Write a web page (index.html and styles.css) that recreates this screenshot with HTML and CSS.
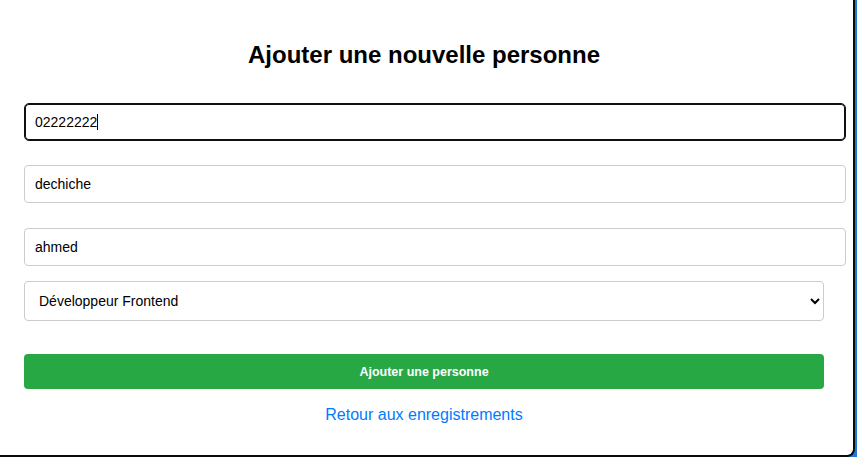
FILE: index.html
```html
<!DOCTYPE html>
<html lang="fr">
<head>
<meta charset="utf-8">
<title>Ajouter une nouvelle personne</title>
<link rel="stylesheet" href="styles.css">
</head>
<body>
<div class="card">
  <h2 class="title">Ajouter une nouvelle personne</h2>
  <form class="form">
    <div class="field field-first">
      <input class="input input-focused" type="text" value="02222222">
      <span class="caret"></span>
    </div>
    <div class="field field-second">
      <input class="input" type="text" value="dechiche">
    </div>
    <div class="field field-third">
      <input class="input" type="text" value="ahmed">
    </div>
    <select class="select">
      <option>Développeur Frontend</option>
      <option>Développeur Backend</option>
    </select>
    <button class="btn" type="button">Ajouter une personne</button>
  </form>
  <div class="back-row">
    <a class="back" href="#">Retour aux enregistrements</a>
  </div>
</div>
</body>
</html>
```
FILE: styles.css
```css
html, body {
  margin: 0;
  padding: 0;
}

body {
  background: #1f7ad6;
  font-family: "Liberation Sans", Arial, sans-serif;
  width: 857px;
  height: 457px;
  overflow: hidden;
}

.card {
  box-sizing: border-box;
  width: 855px;
  height: 457px;
  background: #ffffff;
  border-right: 2px solid #0a0a0a;
  border-bottom: 2px solid #0a0a0a;
  border-bottom-right-radius: 8px;
  padding: 41px 31px 0 24px;
}

.title {
  margin: 0 0 34px;
  width: 800px;
  text-align: center;
  font-size: 24px;
  line-height: 28px;
  font-weight: bold;
  color: #000;
}

.form {
  width: 800px;
  display: flex;
  flex-direction: column;
  align-items: flex-start;
}

.field {
  position: relative;
  width: 800px;
}

.field-first { margin-bottom: 24px; }
.field-second { margin-bottom: 25px; }
.field-third { margin-bottom: 15px; }

.input {
  display: block;
  width: 100%;
  padding: 10px;
  border: 1px solid #cccccc;
  border-radius: 4px;
  font-family: "Liberation Sans", Arial, sans-serif;
  font-size: 14px;
  line-height: normal;
  color: #000;
  background: #fff;
  margin: 0;
  outline: none;
}

.input-focused {
  border-color: #101010;
  border-radius: 5px;
  box-shadow: inset 0 0 0 1px #101010;
}

.caret {
  position: absolute;
  left: 73px;
  top: 11px;
  width: 1px;
  height: 16px;
  background: #000;
}

.select {
  box-sizing: border-box;
  width: 800px;
  height: 40px;
  padding: 10px;
  border: 1px solid #cccccc;
  border-radius: 4px;
  font-family: "Liberation Sans", Arial, sans-serif;
  font-size: 14px;
  color: #000;
  background: #fff;
  margin: 0 0 33px;
}

.btn {
  box-sizing: border-box;
  width: 800px;
  height: 35px;
  border: none;
  border-radius: 4px;
  background: #28a745;
  color: #fff;
  font-family: "Liberation Sans", Arial, sans-serif;
  font-size: 12.5px;
  font-weight: bold;
  padding: 0;
  margin: 0;
}

.back-row {
  width: 800px;
  margin-top: 17px;
  text-align: center;
}

.back {
  color: #007bff;
  text-decoration: none;
  font-size: 16px;
}
```
